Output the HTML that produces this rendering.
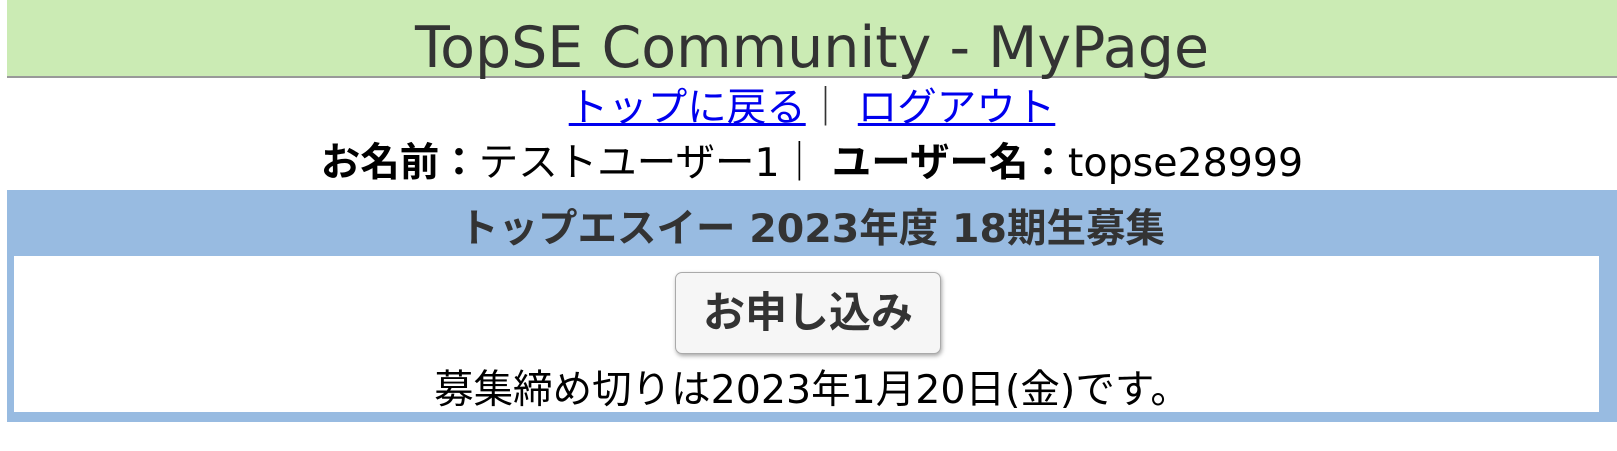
<!DOCTYPE html>
<html><head><meta charset="utf-8"><style>
body{margin:0;width:1617px;height:451px;background:#fff;position:relative;overflow:hidden;font-family:"DejaVu Sans","Noto Sans CJK JP",sans-serif;}
.abs{position:absolute;}
#hd{left:7px;top:0;width:1610px;height:76px;background:#cbebb4;border-bottom:2px solid #999;}
#hd div{position:absolute;left:0;right:0;top:16px;text-align:center;font-size:57px;color:#333;line-height:64px;}
.c{left:7px;width:1610px;text-align:center;white-space:nowrap;}
a{color:#0000ee;}
#blue{left:7px;top:190px;width:1610px;height:232px;background:#98bbe1;}
#white{left:14px;top:256px;width:1585px;height:156px;background:#fff;}
#btn{left:675px;top:272px;width:266px;height:82px;background:#f6f6f6;border:1px solid #aaa;border-radius:7px;box-shadow:1px 2px 4px rgba(0,0,0,.35);font-weight:bold;font-size:42px;color:#333;text-align:center;line-height:80px;box-sizing:border-box;}
</style></head><body>
<div id="hd" class="abs"><div>TopSE Community - MyPage</div></div>
<div class="abs c" style="top:86px;font-size:39.5px;line-height:44px;"><a href="#">トップに戻る</a><span style="color:#333">｜</span> <a href="#">ログアウト</a></div>
<div class="abs c" style="top:141px;font-size:39.5px;line-height:44px;color:#000;"><b>お名前：</b>テストユーザー1｜ <b>ユーザー名：</b>topse28999</div>
<div id="blue" class="abs"></div>
<div class="abs c" style="top:207px;font-size:39.5px;line-height:44px;font-weight:bold;color:#333;">トップエスイー 2023年度 18期生募集</div>
<div id="white" class="abs"></div>
<div id="btn" class="abs">お申し込み</div>
<div class="abs c" style="top:368px;font-size:39.5px;line-height:44px;color:#000;">募集締め切りは2023年1月20日(金)です。</div>
</body></html>
